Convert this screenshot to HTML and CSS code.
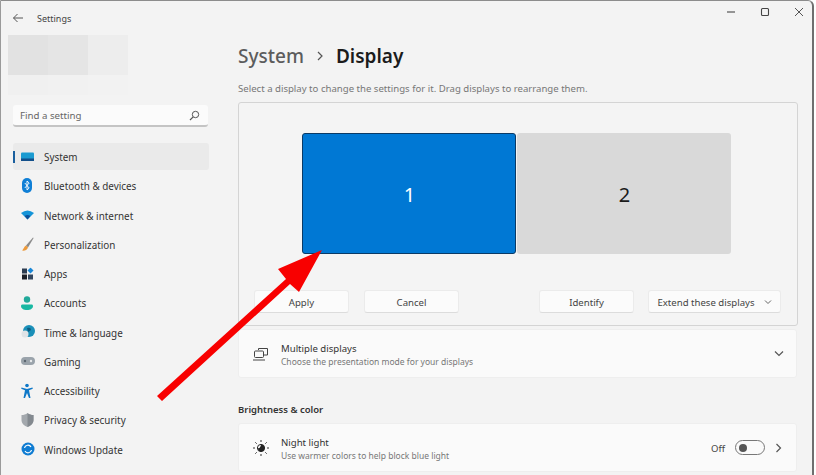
FILE: index.html
```html
<!DOCTYPE html>
<html lang="en">
<head>
<meta charset="utf-8">
<title>Settings</title>
<link rel="stylesheet" href="styles.css">
</head>
<body>
<div class="window">
  <aside class="sidebar">
    <div class="titlebar">
      <svg class="back" width="12" height="12" viewBox="0 0 12 12"><path d="M11 6H1.500M5.500 2 1.500 6l4 4" fill="none" stroke="#555" stroke-width="1"/></svg>
      <span>Settings</span>
    </div>
    <div class="avatar">
      <i class="a1"></i><i class="a2"></i><i class="a3"></i>
      <i class="a4"></i><i class="a5"></i><i class="a6"></i>
    </div>
    <div class="search">
      <span>Find a setting</span>
      <svg width="11" height="11" viewBox="0 0 11 11"><circle cx="6.500" cy="4.500" r="3.200" fill="none" stroke="#555"/><path d="M4.200 6.800 1 10" stroke="#555" stroke-width="1.200"/></svg>
    </div>
    <nav class="nav">
      <div class="item active"><b class="pip"></b>
        <svg class="ico" width="13" height="11" viewBox="0 0 13 11"><rect x="0" y="1" width="13" height="8" rx="1" fill="#1b9bd1"/><rect x="0" y="7" width="13" height="2.500" fill="#124f8a"/></svg>
        <span>System</span></div>
      <div class="item">
        <svg class="ico" width="13" height="16" viewBox="0 0 13 16"><rect x="1" y="0" width="10" height="15" rx="5" fill="#0f7fd6"/><path d="M3.800 5 8.200 10 6 12V3l2.200 2-4.400 5" fill="none" stroke="#fff" stroke-width=".9"/></svg>
        <span>Bluetooth &amp; devices</span></div>
      <div class="item">
        <svg class="ico" width="13" height="10" viewBox="0 0 13 10"><path d="M0 3 Q6.500-2 13 3L6.500 9.500Z" fill="#1494d8"/><path d="M3.600 6Q6.500 3.800 9.400 6L6.500 9.500Z" fill="#0b4f9a"/></svg>
        <span>Network &amp; internet</span></div>
      <div class="item">
        <svg class="ico" width="13" height="15" viewBox="0 0 13 15"><path d="M5 9 12 1l.6.6L7 11Z" fill="#8a8a8a"/><path d="M5 9l2 2c-1 3-4 3.500-6 3 1.500-1 2-4 4-5Z" fill="#ec9a3c"/></svg>
        <span>Personalization</span></div>
      <div class="item">
        <svg class="ico" width="13" height="13" viewBox="0 0 13 13"><rect x="1" y="1" width="5" height="5" fill="#2c3c50"/><rect x="1" y="7" width="5" height="5" fill="#1b1f27"/><rect x="7" y="7" width="5" height="5" fill="#33475f"/><path d="M9.500 0 12.500 3 9.500 6 6.500 3Z" fill="#1886d6"/></svg>
        <span>Apps</span></div>
      <div class="item">
        <svg class="ico" width="12" height="14" viewBox="0 0 12 14"><circle cx="6" cy="3.500" r="3.200" fill="#21a99a"/><path d="M1 8.500h10q1 0 1 1.500c0 2.500-2.500 4-6 4s-6-1.500-6-4q0-1.500 1-1.500Z" fill="#18b8a2"/></svg>
        <span>Accounts</span></div>
      <div class="item">
        <svg class="ico" width="14" height="14" viewBox="0 0 14 14"><circle cx="8" cy="6" r="6" fill="#1a8fb8"/><path d="M6 3q4-1 4 2l-3 2Z" fill="#0d5a7e"/><circle cx="4" cy="9" r="3.500" fill="#dfe3e6"/></svg>
        <span>Time &amp; language</span></div>
      <div class="item">
        <svg class="ico" width="14" height="10" viewBox="0 0 14 10"><rect x="0" y="1" width="14" height="8" rx="4" fill="#9aa3ab"/><circle cx="4" cy="5" r="1.200" fill="#5b6670"/><circle cx="10" cy="5" r="1.200" fill="#e7eaec"/></svg>
        <span>Gaming</span></div>
      <div class="item">
        <svg class="ico" width="12" height="15" viewBox="0 0 12 15"><circle cx="6" cy="2" r="1.800" fill="#0f78c8"/><path d="M.5 4 6 5.500 11.500 4l.3 1.200L8 6.800 9.500 14.500H8L6 9.500 4 14.500H2.500L4 6.800.2 5.200Z" fill="#0f78c8"/></svg>
        <span>Accessibility</span></div>
      <div class="item">
        <svg class="ico" width="13" height="14" viewBox="0 0 13 14"><path d="M6.500 0C8 1.500 10.500 2 12.500 2v5c0 3.500-3 6-6 7-3-1-6-3.500-6-7V2C2.500 2 5 1.500 6.500 0Z" fill="#a3a8ad"/><path d="M6.500 0C8 1.500 10.500 2 12.500 2v5c0 3.500-3 6-6 7Z" fill="#83898f"/></svg>
        <span>Privacy &amp; security</span></div>
      <div class="item">
        <svg class="ico" width="14" height="14" viewBox="0 0 14 14"><circle cx="7" cy="7" r="6.500" fill="#0f7cd2"/><path d="M3.500 6A3.500 3.500 0 0 1 10 5M10.500 8A3.500 3.500 0 0 1 4 9" fill="none" stroke="#fff" stroke-width="1.200"/></svg>
        <span>Windows Update</span></div>
    </nav>
  </aside>

  <main class="main">
    <div class="winbtns">
      <svg width="10" height="10" viewBox="0 0 10 10"><path d="M1 5h8" stroke="#555" stroke-width="1.200"/></svg>
      <svg width="10" height="10" viewBox="0 0 10 10"><rect x="1.500" y="1.500" width="7" height="7" rx="1" fill="none" stroke="#444" stroke-width="1.100"/></svg>
      <svg width="10" height="10" viewBox="0 0 10 10"><path d="M1 1l8 8M9 1 1 9" stroke="#555" stroke-width="1"/></svg>
    </div>
    <h1 class="crumb"><span class="parent">System</span>
      <svg width="8" height="10" viewBox="0 0 8 10"><path d="M2 1l4 4-4 4" fill="none" stroke="#555" stroke-width="1.200"/></svg>
      <span class="current">Display</span></h1>
    <p class="hint">Select a display to change the settings for it. Drag displays to rearrange them.</p>

    <section class="panel">
      <div class="monitors">
        <div class="mon mon1">1</div>
        <div class="mon mon2">2</div>
      </div>
      <div class="actions">
        <button class="btn wide">Apply</button>
        <button class="btn wide">Cancel</button>
        <span class="spacer"></span>
        <button class="btn wide">Identify</button>
        <button class="btn select">Extend these displays
          <svg width="8" height="6" viewBox="0 0 8 6"><path d="M1 1.500l3 3 3-3" fill="none" stroke="#666"/></svg>
        </button>
      </div>
    </section>

    <section class="card first">
      <svg class="card-ico" width="16" height="14" viewBox="0 0 16 14"><path d="M5.500 3V1.500h9V8H11" fill="none" stroke="#444"/><rect x="1.500" y="4" width="9" height="6.500" rx="1" fill="#f9f9f9" stroke="#444"/><path d="M0 13h12" stroke="#444"/></svg>
      <div class="card-text"><div class="t">Multiple displays</div><div class="s">Choose the presentation mode for your displays</div></div>
      <svg class="chev" width="10" height="7" viewBox="0 0 10 7"><path d="M1 1.500l4 4 4-4" fill="none" stroke="#555" stroke-width="1.200"/></svg>
    </section>

    <h2 class="section">Brightness &amp; color</h2>

    <section class="card">
      <svg class="card-ico" width="16" height="16" viewBox="0 0 16 16"><circle cx="8" cy="8" r="3.600" fill="#fff" stroke="#222"/><path d="M8 4.400a3.600 3.600 0 0 1 0 7.200 3 3 0 0 1-3-3.600q2 1 3-3.600Z" fill="#222"/><path d="M8 0v2M8 14v2M0 8h2M14 8h2M2.300 2.300l1.400 1.400M12.300 12.300l1.400 1.400M2.300 13.700l1.400-1.400M12.300 3.700l1.400-1.400" stroke="#333"/></svg>
      <div class="card-text"><div class="t">Night light</div><div class="s">Use warmer colors to help block blue light</div></div>
      <span class="off">Off</span>
      <span class="toggle"><i></i></span>
      <svg class="chev-r" width="7" height="10" viewBox="0 0 7 10"><path d="M1.500 1l4 4-4 4" fill="none" stroke="#555" stroke-width="1.200"/></svg>
    </section>
  </main>
</div>
<svg class="arrow" width="816" height="475" viewBox="0 0 816 475"><path d="M322 250 299 292 290 284 162 401 157 396 286 279 278 269Z" fill="#f80000"/></svg>
</body>
</html>
```
FILE: styles.css
```css
* { box-sizing: border-box; }
html, body { margin: 0; height: 475px; overflow: hidden; background: #fff; }
body { font-family: "Noto Sans", "Open Sans", sans-serif; color: #2a2a2a; position: relative; }

.window {
  display: flex;
  width: 814px;
  height: 475px;
  background: #f3f3f3;
  border-top: 1px solid #8c8c8c;
  border-left: 1px solid #9a9a9a;
  border-right: 2px solid #6f6f6f;
  border-top-right-radius: 6px;
}

.sidebar { width: 229px; flex: none; }
.titlebar {
  height: 34px;
  display: flex;
  align-items: center;
  gap: 13px;
  padding-left: 11px;
  font-size: 9px;
  color: #444;
}
.avatar {
  display: grid;
  grid-template-columns: repeat(3, 40px);
  grid-template-rows: 40px 20px;
  margin-left: 7px;
  width: 120px;
}
.a1 { background: #e2e2e2; }
.a2 { background: #e5e5e5; }
.a3 { background: #ededed; }
.a4 { background: #f0f0f0; }
.a5 { background: #f1f1f1; }
.a6 { background: #f2f2f2; }

.search {
  margin: 10px 0 0 12px;
  width: 195px;
  height: 22px;
  background: #fbfbfb;
  border-radius: 3px;
  border-bottom: 2px solid #c4c4c4;
  display: flex;
  align-items: center;
  justify-content: space-between;
  padding: 0 8px 0 7px;
  font-size: 9.7px;
  color: #666;
}

.nav { margin: 16px 0 0 12px; width: 196px; display: flex; flex-direction: column; gap: 2.25px; }
.item {
  height: 27px;
  display: flex;
  align-items: center;
  position: relative;
  padding: 1px 0 0 31px;
  font-size: 9.9px;
  color: #333;
  border-radius: 3px;
}
.item.active { background: #eaeaea; }
.pip { position: absolute; left: 0; top: 8px; width: 2px; height: 12px; background: #1a5f9e; }
.ico { position: absolute; left: 8px; top: 50%; transform: translateY(-50%); }

.main { flex: 1; min-width: 0; padding-left: 8px; position: relative; }
.winbtns {
  position: absolute;
  right: 8px;
  top: 6px;
  display: flex;
  gap: 24px;
}
.crumb {
  margin: 0;
  padding-top: 36px;
  box-sizing: content-box;
  display: flex;
  align-items: center;
  gap: 12px;
  font-size: 19px;
  font-weight: 500;
  line-height: 38px;
  height: 38px;
}
.parent { color: #5c5c5c; }
.current { color: #1b1b1b; font-weight: 600; }
.hint { margin: 7px 0 0; font-size: 9.6px; line-height: 14px; color: #777; }

.panel {
  margin-top: 6px;
  width: 560px;
  height: 224px;
  background: #f4f4f4;
  border: 1px solid #d4d4d4;
  border-radius: 3px;
  display: flex;
  flex-direction: column;
  padding: 30px 16px 0 15px;
}
.monitors { display: flex; justify-content: center; gap: 1px; margin-left: -3px; }
.mon {
  width: 214px;
  height: 121px;
  display: flex;
  align-items: center;
  justify-content: center;
  padding: 2px 0 0 2px;
  font-size: 20px;
  border-radius: 3px;
}
.mon1 { background: #0078d4; color: #fff; border: 1px solid #0a3a66; }
.mon2 { background: #d9d9d9; color: #1b1b1b; }
.actions { display: flex; margin-top: 36px; align-items: flex-start; gap: 15px; }
.spacer { flex: 1; }
.btn {
  height: 23px;
  font: inherit;
  font-size: 9.6px;
  color: #444;
  background: #fbfbfb;
  border: 1px solid #ebebeb;
  border-bottom-color: #dcdcdc;
  border-radius: 3px;
  padding: 1px 0 0;
}
.wide { width: 95px; }
.select {
  width: 133px;
  margin-left: -1px;
  display: flex;
  align-items: center;
  justify-content: center;
  gap: 9px;
}

.card {
  width: 559px;
  height: 49px;
  background: #fafafa;
  border: 1px solid #eeeeee;
  border-radius: 3px;
  display: flex;
  align-items: center;
  padding: 0 12px 0 14px;
}
.card.first { margin-top: 3px; }
.card-ico { flex: none; margin-right: 12px; }
.card-text { flex: 1; padding-top: 2px; }
.t { font-size: 9.6px; line-height: 14px; color: #333; }
.s { font-size: 8.5px; line-height: 12px; color: #777; }
.section { margin: 25px 0 6px; font-size: 9.5px; font-weight: 600; line-height: 14px; color: #333; }
.off { font-size: 9.5px; color: #444; margin-right: 10px; padding-top: 1px; }
.toggle {
  width: 30px;
  height: 15px;
  border: 1px solid #777;
  border-radius: 8px;
  display: flex;
  align-items: center;
  padding-left: 3px;
  margin-right: 10px;
}
.toggle i { width: 8px; height: 8px; border-radius: 50%; background: #555; }
.chev-r { margin-right: 2px; }
.arrow { position: absolute; left: 0; top: 0; pointer-events: none; }
```
